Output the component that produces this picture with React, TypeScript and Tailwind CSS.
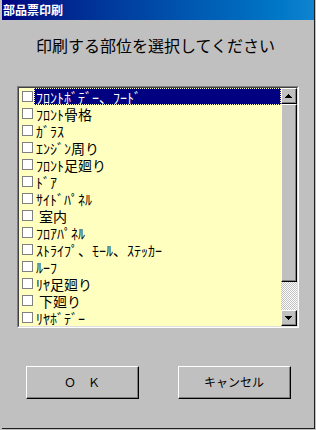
const parts = [
  "ﾌﾛﾝﾄﾎﾞﾃﾞｰ、ﾌｰﾄﾞ",
  "ﾌﾛﾝﾄ骨格",
  "ｶﾞﾗｽ",
  "ｴﾝｼﾞﾝ周り",
  "ﾌﾛﾝﾄ足廻り",
  "ﾄﾞｱ",
  "ｻｲﾄﾞﾊﾟﾈﾙ",
  "室内",
  "ﾌﾛｱﾊﾟﾈﾙ",
  "ｽﾄﾗｲﾌﾟ、ﾓｰﾙ、ｽﾃｯｶｰ",
  "ﾙｰﾌ",
  "ﾘﾔ足廻り",
  "下廻り",
  "ﾘﾔﾎﾞﾃﾞｰ",
];

// the two kanji-first rows sit a few pixels further in
const indented = [7, 12];

const font = { fontFamily: '"Noto Sans CJK JP", "Noto Sans", sans-serif' };

// raised win95 style box
const Raised = ({ className, children }: { className?: string; children?: React.ReactNode }) => (
  <div className={"border-t border-l border-white border-r border-b border-r-black border-b-black " + (className ?? "")}>
    <div className="h-full w-full border-r border-b border-[#808080] bg-[#c0c0c0] flex items-center justify-center">
      {children}
    </div>
  </div>
);

const Scrollbar = () => (
  <div className="w-[16px] flex flex-col">
    <Raised className="h-[16px]">
      <svg width="7" height="4" viewBox="0 0 7 4">
        <path d="M3 0h1v1h1v1h1v1h1v1H0V3h1V2h1V1h1z" fill="#000" />
      </svg>
    </Raised>
    <Raised className="h-[178px]" />
    <div className="h-[28px] bg-[repeating-conic-gradient(#c0c0c0_0%_25%,#ffffff_0%_50%)] bg-[length:2px_2px]" />
    <Raised className="h-[16px]">
      <svg width="7" height="4" viewBox="0 0 7 4">
        <path d="M0 0h7v1H6v1H5v1H4v1H3V3H2V2H1V1H0z" fill="#000" />
      </svg>
    </Raised>
  </div>
);

export default function App() {
  return (
    <div className="w-[316px] h-[430px] bg-[#c0c0c0] overflow-hidden" style={font}>
      <div className="ml-[2px] w-[313px] h-[429px] border-r border-b border-[#202020] flex flex-col">
        <div className="h-[20px] bg-gradient-to-r from-[#000080] to-[#1084d0] flex items-center pl-[1px]">
          <span className="text-white text-[12px] font-bold leading-[12px]">部品票印刷</span>
        </div>

        <div className="mt-[17px] pl-[34px] text-[16px] leading-[16px] text-black">
          印刷する部位を選択してください
        </div>

        <div className="mt-[33px] ml-[15px] w-[282px] border-t border-l border-[#808080] border-r border-b border-r-white border-b-white">
          <div className="border-t border-l border-[#404040] border-r border-b border-r-[#dfdfdf] border-b-[#dfdfdf] flex">
            <div className="w-[262px] h-[238px] bg-[#ffffc0] flex flex-col overflow-hidden">
              {parts.map((p, i) => (
                <div key={i} className="h-[17px] shrink-0 flex items-center">
                  <div className="ml-[3px] mr-[1px] w-[11px] h-[11px] border border-[#808080] bg-white shrink-0" />
                  <div
                    className={
                      "flex-1 h-[17px] flex items-center text-[14px] leading-[14px] whitespace-nowrap border " +
                      (indented.includes(i) ? "pl-[4px] " : "pl-[1px] ") +
                      (i === 0
                        ? "bg-[#000080] text-white border-dotted border-[#ffffc0]"
                        : "text-black border-transparent")
                    }
                  >
                    {p}
                  </div>
                </div>
              ))}
            </div>
            <Scrollbar />
          </div>
        </div>

        <div className="mt-[38px] ml-[24px] flex gap-[39px]">
          <Raised className="w-[113px] h-[33px]">
            <span className="text-[12px] text-black">Ｏ　Ｋ</span>
          </Raised>
          <Raised className="w-[113px] h-[33px]">
            <span className="text-[12px] text-black">キャンセル</span>
          </Raised>
        </div>
      </div>
    </div>
  );
}
